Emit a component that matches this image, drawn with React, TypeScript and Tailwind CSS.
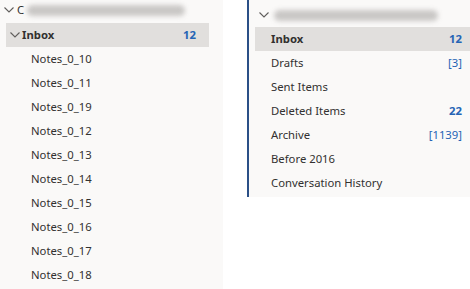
import React from 'react';

const notes = ['Notes_0_10', 'Notes_0_11', 'Notes_0_19', 'Notes_0_12', 'Notes_0_13', 'Notes_0_14', 'Notes_0_15', 'Notes_0_16', 'Notes_0_17', 'Notes_0_18'];

const folders: { name: string; count?: string; bold?: boolean }[] = [
    { name: 'Drafts', count: '[3]' },
    { name: 'Sent Items' },
    { name: 'Deleted Items', count: '22', bold: true },
    { name: 'Archive', count: '[1139]' },
    { name: 'Before 2016' },
    { name: 'Conversation History' },
];

const Chevron: React.FC = () => (
    <svg width="10" height="6" viewBox="0 0 10 6" className="shrink-0">
        <path d="M0.5 0.5 L5 5 L9.5 0.5" fill="none" stroke="#605e5c" strokeWidth="1.1" />
    </svg>
);

// email address is blurred out in the screenshot
const Blurred: React.FC<{ w: number }> = ({ w }) => (
    <div className="h-[11px] rounded-full bg-[#c4c2c0] blur-[2.5px] opacity-90" style={{ width: w }} />
);

const App: React.FC = () => {
    return (
        <div
            className="flex w-[470px] h-[289px] overflow-hidden bg-white text-[#323130] text-[11.3px]"
            style={{ fontFamily: '"Noto Sans", "Open Sans", sans-serif' }}
        >
            {/* left tree */}
            <div className="w-[223px] h-full bg-[#faf9f8] flex flex-col">
                <div className="h-[20px] flex items-center pl-[4px] gap-[3px]">
                    <Chevron />
                    <span>C</span>
                    <Blurred w={158} />
                </div>
                <div className="mt-[3px] ml-[6px] mr-[14px] h-[24px] bg-[#e1dfdd] flex items-center pl-[4px] pr-[13px]">
                    <Chevron />
                    <span className="ml-[2px] font-bold">Inbox</span>
                    <span className="ml-auto font-bold text-[#2564b5]">12</span>
                </div>
                {notes.map((n) => (
                    <div key={n} className="h-[24px] flex items-center pl-[31px]">
                        {n}
                    </div>
                ))}
            </div>

            {/* right pane */}
            <div className="ml-[24px] flex-1 h-[197px] bg-[#faf9f8] border-l-2 border-[#2b4f86] flex flex-col">
                <div className="h-[27px] flex items-center pl-[10px] gap-[5px] pt-[3px]">
                    <Chevron />
                    <Blurred w={164} />
                </div>
                <div className="ml-[6px] h-[24px] bg-[#e1dfdd] flex items-center pl-[16px] pr-[8px]">
                    <span className="font-bold">Inbox</span>
                    <span className="ml-auto font-bold text-[#2564b5]">12</span>
                </div>
                {folders.map((f) => (
                    <div key={f.name} className="h-[24px] flex items-center pl-[22px] pr-[8px]">
                        <span>{f.name}</span>
                        {f.count && (
                            <span className={`ml-auto text-[#2564b5] ${f.bold ? 'font-bold' : ''}`}>{f.count}</span>
                        )}
                    </div>
                ))}
            </div>
        </div>
    );
};

export default App;
